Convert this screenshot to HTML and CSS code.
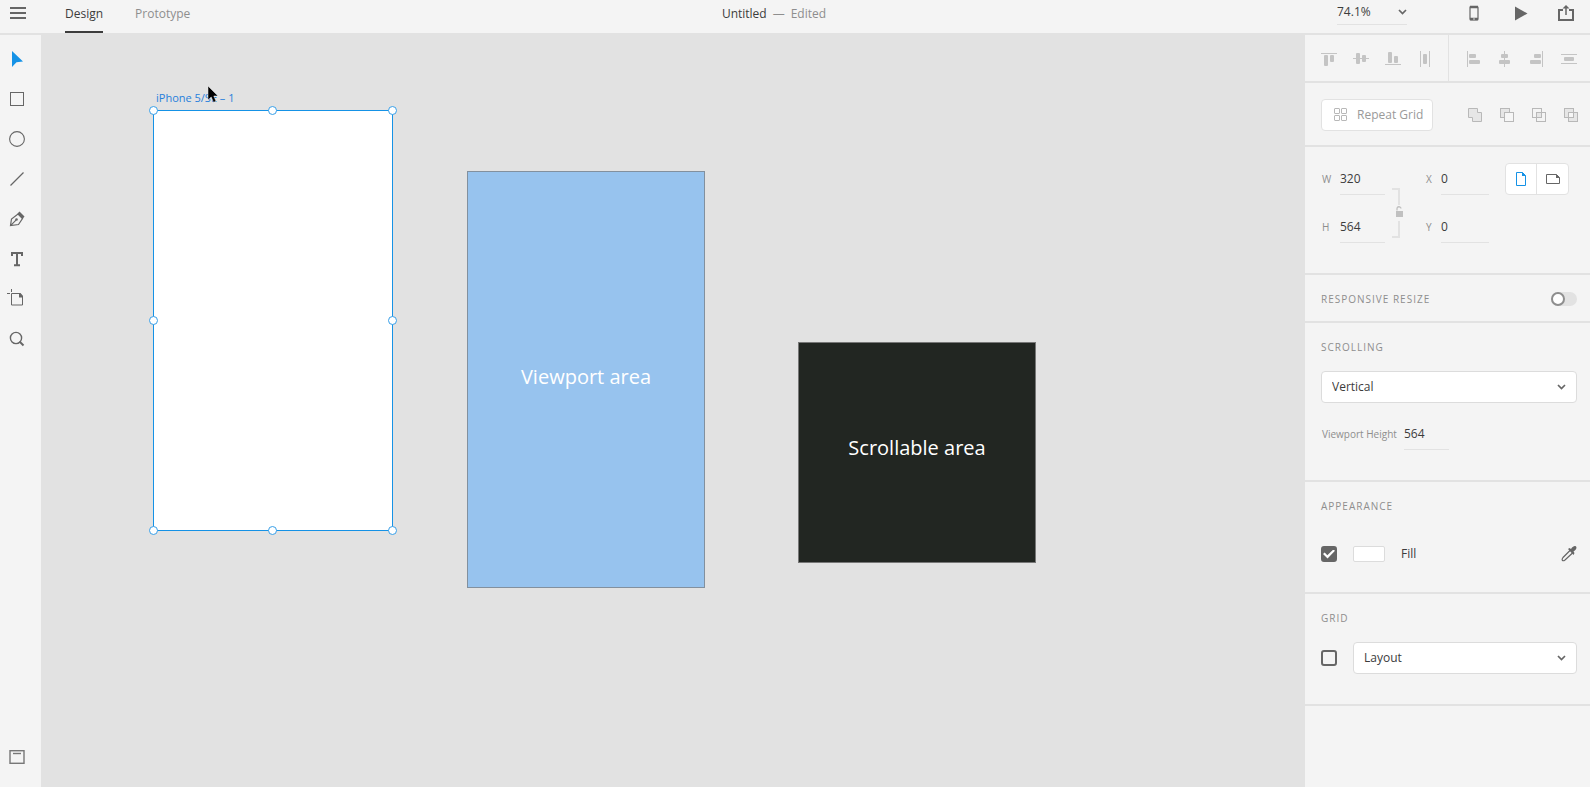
FILE: index.html
```html
<!DOCTYPE html>
<html lang="en">
<head>
<meta charset="utf-8">
<title>Untitled</title>
<link rel="stylesheet" href="styles.css">
</head>
<body>
<div class="app">
  <header class="topbar">
    <button class="icon-btn menu" aria-label="Menu"><svg width="16" height="12" viewBox="0 0 16 12"><path d="M0 1h16M0 6h16M0 11h16" stroke="#666" stroke-width="2"/></svg></button>
    <nav class="tabs">
      <button class="tab tab-active">Design</button>
      <button class="tab">Prototype</button>
    </nav>
    <div class="doc-title"><span>Untitled</span><span class="muted">—</span><span class="muted">Edited</span></div>
    <div class="top-actions">
      <label class="zoom"><input class="zoom-input" value="74.1%" aria-label="Zoom level"><svg width="9" height="6" viewBox="0 0 9 6"><path d="M1 1l3.500 3.500L8 1" fill="none" stroke="#666" stroke-width="1.700"/></svg></label>
      <div class="top-icons">
        <button class="icon-btn" aria-label="Device preview"><svg width="16" height="16" viewBox="0 0 16 16"><rect x="4" y="1.500" width="8" height="13.500" rx="1" fill="none" stroke="#666" stroke-width="1.200"/><path d="M4 2h8M4 14h8" stroke="#666" stroke-width="2.600"/><path d="M7.200 14h1.600" stroke="#f4f4f4"/></svg></button>
        <button class="icon-btn" aria-label="Desktop preview"><svg width="16" height="16" viewBox="0 0 16 16"><path d="M3 1.500l12.500 7L3 15.500z" fill="#666"/></svg></button>
        <button class="icon-btn" aria-label="Share"><svg width="16" height="16" viewBox="0 0 16 16"><path d="M5 5H1v10h14V5h-4" fill="none" stroke="#666" stroke-width="2"/><path d="M8 10V2" stroke="#666" stroke-width="1.500"/><path d="M4.500 3.500L8 0l3.500 3.500z" fill="#666"/></svg></button>
      </div>
    </div>
  </header>

  <aside class="toolbar">
    <button class="icon-btn" aria-label="Select"><svg width="16" height="16" viewBox="0 0 16 16"><path d="M3 0v16l4.500-4.800 6.500-.7z" fill="#1592e6"/></svg></button>
    <button class="icon-btn" aria-label="Rectangle"><svg width="16" height="16" viewBox="0 0 16 16"><rect x="1.500" y="1.500" width="13" height="13" fill="none" stroke="#666"/></svg></button>
    <button class="icon-btn" aria-label="Ellipse"><svg width="16" height="16" viewBox="0 0 16 16"><circle cx="8" cy="8" r="7.400" fill="none" stroke="#666" stroke-width="1.100"/></svg></button>
    <button class="icon-btn" aria-label="Line"><svg width="16" height="16" viewBox="0 0 16 16"><path d="M1.500 14.500l13-13" stroke="#666" stroke-width="1.200"/></svg></button>
    <button class="icon-btn" aria-label="Pen"><svg width="16" height="16" viewBox="0 0 16 16"><path d="M1.500 14.500L2.500 8 9 3l4.500 4.500-4 6zM2 14.200l5-5" fill="none" stroke="#666" stroke-width="1.200"/><circle cx="7.500" cy="8.500" r="1.300" fill="#666"/><path d="M8.500 2.500L10.500.5l5 5-2 2.500z" fill="#666"/></svg></button>
    <button class="icon-btn" aria-label="Text"><svg width="16" height="16" viewBox="0 0 16 16"><path d="M3 5V2h10v3M8 2v12M5 14.200h6" fill="none" stroke="#666" stroke-width="2"/></svg></button>
    <button class="icon-btn" aria-label="Artboard"><svg width="16" height="16" viewBox="0 0 16 16" overflow="visible"><path d="M2.500 2.500h8.500l2.500 3v8.500h-11zM-2 2.500h3M2.500-2v3" fill="none" stroke="#666"/><path d="M10 2h1.500L14 5v1.500h-4z" fill="#666"/></svg></button>
    <button class="icon-btn" aria-label="Zoom"><svg width="16" height="16" viewBox="0 0 16 16"><circle cx="7" cy="7" r="5.600" fill="none" stroke="#666" stroke-width="1.400"/><path d="M10.500 10.500l4 4" stroke="#666" stroke-width="2"/></svg></button>
    <button class="icon-btn assets" aria-label="Assets"><svg width="16" height="16" viewBox="0 0 16 16"><rect x="1" y="1.700" width="14" height="12.600" fill="none" stroke="#777" stroke-width="1.400"/><path d="M4 4.500h8" stroke="#777" stroke-width="1.400"/></svg></button>
  </aside>

  <main class="canvas">
    <div class="artboard-label">iPhone 5/SE – 1</div>
    <div class="artboard board-phone">
      <i class="handle t l"></i><i class="handle t c"></i><i class="handle t r"></i>
      <i class="handle m l"></i><i class="handle m r"></i>
      <i class="handle b l"></i><i class="handle b c"></i><i class="handle b r"></i>
    </div>
    <div class="artboard board-viewport">Viewport area</div>
    <div class="artboard board-scroll">Scrollable area</div>
    <svg class="pointer" width="12" height="19" viewBox="0 0 12 19"><path d="M1 1v14l3.200-3 2.300 5.300 2.500-1L6.800 11H11z" fill="#000" stroke="#eee" stroke-width=".5"/></svg>
  </main>

  <aside class="panel">
    <section class="align">
      <div class="align-group align-first">
        <button class="icon-btn" aria-label="Align top"><svg width="16" height="16" viewBox="0 0 16 16" fill="#c4c4c4"><rect y="2" width="16" height="1"/><rect x="3" y="4" width="4" height="11" rx="1"/><rect x="9" y="4" width="4" height="7" rx="1"/></svg></button>
        <button class="icon-btn" aria-label="Align middle"><svg width="16" height="16" viewBox="0 0 16 16" fill="#c4c4c4"><rect y="7" width="16" height="1"/><rect x="3" y="2" width="4" height="11" rx="1"/><rect x="9" y="4" width="4" height="7" rx="1"/></svg></button>
        <button class="icon-btn" aria-label="Align bottom"><svg width="16" height="16" viewBox="0 0 16 16" fill="#c4c4c4"><rect y="13" width="16" height="1"/><rect x="3" y="1" width="4" height="11" rx="1"/><rect x="9" y="5" width="4" height="7" rx="1"/></svg></button>
        <button class="icon-btn" aria-label="Distribute horizontally"><svg width="16" height="16" viewBox="0 0 16 16" fill="#c4c4c4"><rect x="3" width="1" height="16"/><rect x="12" width="1" height="16"/><rect x="6" y="3" width="4" height="10" rx="1"/></svg></button>
      </div>
      <div class="align-group">
        <button class="icon-btn" aria-label="Align left"><svg width="16" height="16" viewBox="0 0 16 16" fill="#c4c4c4"><rect x="2" width="1" height="16"/><rect x="4" y="3" width="7" height="4" rx="1"/><rect x="4" y="9" width="11" height="4" rx="1"/></svg></button>
        <button class="icon-btn" aria-label="Align center"><svg width="16" height="16" viewBox="0 0 16 16" fill="#c4c4c4"><rect x="7" width="1" height="16"/><rect x="4" y="3" width="7" height="4" rx="1"/><rect x="2" y="9" width="11" height="4" rx="1"/></svg></button>
        <button class="icon-btn" aria-label="Align right"><svg width="16" height="16" viewBox="0 0 16 16" fill="#c4c4c4"><rect x="13" width="1" height="16"/><rect x="5" y="3" width="7" height="4" rx="1"/><rect x="1" y="9" width="11" height="4" rx="1"/></svg></button>
        <button class="icon-btn" aria-label="Distribute vertically"><svg width="16" height="16" viewBox="0 0 16 16" fill="#c4c4c4"><rect y="3" width="16" height="1"/><rect y="12" width="16" height="1"/><rect x="3" y="6" width="10" height="4" rx="1"/></svg></button>
      </div>
    </section>

    <section class="repeat">
      <button class="repeat-btn"><svg width="14" height="14" viewBox="0 0 14 14" fill="none" stroke="#b8b8b8"><rect x=".5" y=".5" width="5" height="5" rx=".5"/><rect x="7.500" y=".5" width="5" height="5" rx=".5"/><rect x=".5" y="7.500" width="5" height="5" rx=".5"/><rect x="7.500" y="7.500" width="5" height="5" rx=".5"/></svg>Repeat Grid</button>
      <div class="bool-ops">
        <button class="icon-btn" aria-label="Add"><svg width="16" height="16" viewBox="0 0 16 16"><path d="M1.500 1.500h9v4h4v9h-9v-4h-4z" fill="#e6e6e6" stroke="#b8b8b8"/></svg></button>
        <button class="icon-btn" aria-label="Subtract"><svg width="16" height="16" viewBox="0 0 16 16" stroke="#b8b8b8"><rect x="1.500" y="1.500" width="9" height="9" fill="#e6e6e6"/><rect x="5.500" y="5.500" width="9" height="9" fill="#f6f6f6"/></svg></button>
        <button class="icon-btn" aria-label="Intersect"><svg width="16" height="16" viewBox="0 0 16 16" stroke="#b8b8b8" fill="none"><rect x="1.500" y="1.500" width="9" height="9"/><rect x="5.500" y="5.500" width="9" height="9"/><rect x="5.500" y="5.500" width="5" height="5" fill="#e6e6e6"/></svg></button>
        <button class="icon-btn" aria-label="Exclude overlap"><svg width="16" height="16" viewBox="0 0 16 16" stroke="#b8b8b8" fill="#e6e6e6"><rect x="1.500" y="1.500" width="9" height="9"/><rect x="5.500" y="5.500" width="9" height="9"/><rect x="5.500" y="5.500" width="5" height="5" fill="#f6f6f6"/></svg></button>
      </div>
    </section>

    <section class="geometry">
      <div class="fields">
        <label class="field"><span>W</span><input value="320"></label>
        <label class="field"><span>H</span><input value="564"></label>
      </div>
      <svg class="lock" width="12" height="50" viewBox="0 0 12 50"><path d="M0 1h7v16M7 33v16H0" fill="none" stroke="#e2e2e2" stroke-width="2"/><rect x="4" y="23" width="7" height="6" fill="#c0c0c0"/><path d="M5 22.500v-1.500a2 2 0 0 1 4-.5" fill="none" stroke="#c0c0c0" stroke-width="1.300"/></svg>
      <div class="fields fields-xy">
        <label class="field"><span>X</span><input value="0"></label>
        <label class="field"><span>Y</span><input value="0"></label>
      </div>
      <div class="orientation">
        <button aria-label="Portrait"><svg width="16" height="16" viewBox="0 0 16 16"><path d="M3.500 1.500h6l3 3v10h-9z" fill="none" stroke="#1592e6"/><path d="M9 1l4 4H9z" fill="#1592e6"/></svg></button>
        <button aria-label="Landscape"><svg width="16" height="16" viewBox="0 0 16 16"><path d="M1.500 3.500h10l3 3v6h-13z" fill="none" stroke="#666"/><path d="M11 3l4 4h-4z" fill="#666"/></svg></button>
      </div>
    </section>

    <section class="responsive">
      <label class="heading" for="responsive">RESPONSIVE RESIZE</label>
      <input class="switch" type="checkbox" id="responsive">
    </section>

    <section class="scrolling">
      <label class="heading" for="scrolling">SCROLLING</label>
      <div class="select-wrap"><select id="scrolling"><option>Vertical</option></select><svg width="9" height="6" viewBox="0 0 9 6"><path d="M1 1l3.500 3.500L8 1" fill="none" stroke="#666" stroke-width="1.700"/></svg></div>
      <label class="field viewport-field"><span>Viewport Height</span><input value="564"></label>
    </section>

    <section class="appearance">
      <h2 class="heading">APPEARANCE</h2>
      <div class="fill-row">
        <input class="check" type="checkbox" id="fill" checked>
        <button class="swatch" aria-label="Fill color"></button>
        <label for="fill">Fill</label>
        <button class="icon-btn dropper" aria-label="Eyedropper"><svg width="16" height="16" viewBox="0 0 16 16"><path d="M9 4.500L2 11.500c-2 3 0 4 2 2.500L11.500 7" fill="none" stroke="#666" stroke-width="1.200"/><path d="M7 3l1.500-1 1.500 1c2-3 4-3.500 5-2.500s.5 3-2.500 5l1 1.500L12.500 9z" fill="#666"/></svg></button>
      </div>
    </section>

    <section class="grid-section">
      <h2 class="heading">GRID</h2>
      <div class="grid-row">
        <input class="check" type="checkbox" aria-label="Show grid">
        <div class="select-wrap"><select aria-label="Grid type"><option>Layout</option></select><svg width="9" height="6" viewBox="0 0 9 6"><path d="M1 1l3.500 3.500L8 1" fill="none" stroke="#666" stroke-width="1.700"/></svg></div>
      </div>
    </section>
  </aside>
</div>
</body>
</html>
```
FILE: styles.css
```css
*,
*::before {
  box-sizing: border-box;
}

body {
  margin: 0;
  background: #e2e2e2;
  color: #3c3c3c;
  font: 12px/16px "Open Sans", "Noto Sans", sans-serif;
}

button,
input,
select {
  margin: 0;
  padding: 0;
  border: 0;
  background: none;
  color: inherit;
  font: inherit;
}

svg {
  display: block;
}

.app {
  display: grid;
  grid-template: auto 1fr / 41px 1fr 285px;
  min-height: 100vh;
}

.topbar {
  grid-column: 1 / -1;
  display: grid;
  grid-template-columns: 1fr auto 1fr;
  height: 35px;
  padding: 0 16px 0 10px;
  border-bottom: 2px solid #e2e2e2;
  background: #f4f4f4;
}

.icon-btn {
  display: block;
  flex: none;
}

.menu {
  grid-area: 1 / 1;
  justify-self: start;
  align-self: start;
  padding-top: 7px;
}

.tabs {
  grid-area: 1 / 1;
  display: flex;
  gap: 32px;
  padding-left: 55px;
}

.tab {
  padding-bottom: 4px;
  border-bottom: 2px solid transparent;
  color: #8e8e8e;
}

.tab-active {
  border-color: #3c3c3c;
  color: #3c3c3c;
}

.doc-title {
  display: flex;
  gap: 6px;
  padding: 6px 36px 0 0;
}

.muted {
  color: #8e8e8e;
}

.top-actions {
  display: flex;
  justify-content: flex-end;
  align-items: flex-start;
  gap: 59px;
}

.zoom {
  display: flex;
  align-items: center;
  justify-content: space-between;
  width: 70px;
  height: 25px;
  border-bottom: 1px solid #e2e2e2;
}

.zoom-input {
  width: 50px;
}

.top-icons {
  display: flex;
  gap: 30px;
  padding-top: 5px;
}

.toolbar {
  display: flex;
  flex-direction: column;
  gap: 24px;
  padding: 16px 9px 22px;
  background: #f4f4f4;
}

.assets {
  margin-top: auto;
}

.canvas {
  position: relative;
}

.artboard-label {
  position: absolute;
  left: 115px;
  top: 55px;
  color: #2680dc;
  font-size: 11px;
}

.artboard {
  position: absolute;
  display: flex;
  align-items: center;
  justify-content: center;
  border: 1px solid #82909e;
  color: #fff;
  font-size: 20px;
}

.board-phone {
  left: 112px;
  top: 75px;
  width: 240px;
  height: 421px;
  border-color: #1592e6;
  background: #fff;
}

.board-viewport {
  left: 426px;
  top: 136px;
  width: 238px;
  height: 417px;
  padding-bottom: 6px;
  background: #97c3ee;
}

.board-scroll {
  left: 757px;
  top: 307px;
  width: 238px;
  height: 221px;
  padding-bottom: 10px;
  border-color: #777;
  background: #222622;
}

.handle {
  position: absolute;
  width: 9px;
  height: 9px;
  border: 1px solid #379fe8;
  border-radius: 50%;
  background: #fff;
}

.t { top: -5px; }
.m { top: 205px; }
.b { bottom: -5px; }
.l { left: -5px; }
.c { left: 114px; }
.r { right: -5px; }

.pointer {
  position: absolute;
  left: 166px;
  top: 50px;
}

.panel {
  background: #f4f4f4;
}

.panel section {
  border-bottom: 2px solid #e2e2e2;
}

.align {
  display: flex;
}

.align-group {
  display: flex;
  flex: none;
  gap: 16px;
  padding: 16px 0 14px 16px;
}

.align-first {
  padding-right: 15px;
  border-right: 1px solid #e2e2e2;
}

.repeat {
  display: flex;
  align-items: center;
  gap: 34px;
  height: 64px;
  padding: 2px 0 0 16px;
}

.repeat-btn {
  display: flex;
  align-items: center;
  gap: 9px;
  height: 32px;
  width: 112px;
  padding-left: 12px;
  border: 1px solid #e2e2e2;
  border-radius: 4px;
  background: #fff;
  color: #9a9a9a;
  white-space: nowrap;
}

.bool-ops {
  display: flex;
  flex: none;
  gap: 16px;
}

.geometry {
  display: flex;
  align-items: flex-start;
  padding: 16px 21px 30px 17px;
}

.fields {
  display: grid;
  gap: 16px;
}

.field {
  display: flex;
  align-items: flex-start;
  color: #8e8e8e;
  font-size: 10px;
  line-height: 32px;
}

.field span {
  width: 18px;
}

.field input {
  width: 45px;
  height: 32px;
  border-bottom: 1px solid #e2e2e2;
  color: #3c3c3c;
  font-size: 12px;
}

.lock {
  margin: 25px 22px 0 7px;
}

.fields-xy .field span {
  width: 15px;
}

.fields-xy .field input {
  width: 48px;
}

.orientation {
  display: flex;
  margin-left: auto;
  border: 1px solid #e2e2e2;
  border-radius: 4px;
  background: #fff;
}

.orientation button {
  padding: 7px;
}

.orientation button + button {
  padding-left: 8px;
  border-left: 1px solid #e2e2e2;
}

.heading {
  display: block;
  margin: 0;
  color: #8e8e8e;
  font-size: 10px;
  font-weight: 400;
  letter-spacing: 1px;
}

.responsive {
  display: flex;
  align-items: center;
  justify-content: space-between;
  height: 48px;
  padding: 2px 13px 0 16px;
}

.switch {
  appearance: none;
  width: 26px;
  height: 14px;
  border-radius: 7px;
  background: #e2e2e2;
}

.switch::before {
  content: "";
  display: block;
  width: 14px;
  height: 14px;
  border: 2px solid #8e8e8e;
  border-radius: 50%;
  background: #fff;
}

.scrolling {
  padding: 16px 13px 30px 16px;
}

.select-wrap {
  display: grid;
  flex: 1;
  align-items: center;
}

.select-wrap select {
  grid-area: 1 / 1;
  appearance: none;
  width: 100%;
  height: 32px;
  padding: 0 10px;
  border: 1px solid #dcdcdc;
  border-radius: 4px;
  background: #fff;
}

.select-wrap svg {
  grid-area: 1 / 1;
  justify-self: end;
  margin-right: 11px;
  pointer-events: none;
}

.scrolling .select-wrap {
  margin: 16px 0 15px;
}

.viewport-field span {
  width: 83px;
  padding-left: 1px;
  white-space: nowrap;
}

.appearance {
  padding: 16px 13px 22px 16px;
}

.fill-row,
.grid-row {
  display: flex;
  align-items: center;
  gap: 16px;
}

.fill-row {
  height: 32px;
  margin-top: 24px;
}

.check {
  appearance: none;
  flex: none;
  display: grid;
  place-items: center;
  width: 16px;
  height: 16px;
  border: 2px solid #666;
  border-radius: 3px;
}

.check:checked {
  background: #666;
}

.check:checked::before {
  content: "";
  width: 12px;
  height: 9px;
  background: #fff;
  clip-path: polygon(0 50%, 14% 34%, 36% 64%, 86% 0, 100% 14%, 38% 100%);
}

.swatch {
  width: 32px;
  height: 16px;
  border: 1px solid #dcdcdc;
  border-radius: 2px;
  background: #fff;
}

.dropper {
  margin-left: auto;
}

.grid-section {
  padding: 16px 13px 30px 16px;
}

.grid-row {
  margin-top: 16px;
}
```
